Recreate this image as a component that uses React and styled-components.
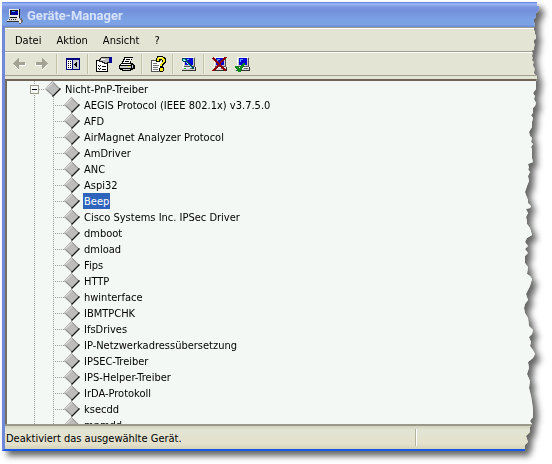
import React, { useState } from 'react';
import styled, { createGlobalStyle, css } from 'styled-components';

const DRIVERS = [
  'AEGIS Protocol (IEEE 802.1x) v3.7.5.0',
  'AFD',
  'AirMagnet Analyzer Protocol',
  'AmDriver',
  'ANC',
  'Aspi32',
  'Beep',
  'Cisco Systems Inc. IPSec Driver',
  'dmboot',
  'dmload',
  'Fips',
  'HTTP',
  'hwinterface',
  'IBMTPCHK',
  'IfsDrives',
  'IP-Netzwerkadressübersetzung',
  'IPSEC-Treiber',
  'IPS-Helper-Treiber',
  'IrDA-Protokoll',
  'ksecdd',
  'mnmdd',
];

// torn right edge: [inset from the right, y]
const TEAR_HEIGHT = 449;
const TEAR = [
  [3, 0], [3, 4], [1, 4], [1, 7], [2, 10], [4, 11], [4, 15], [6, 17], [6, 20], [5, 22], [6, 26], [6, 28],
  [5, 29], [5, 32], [4, 33], [4, 37], [6, 38], [6, 41], [5, 42], [6, 46], [6, 48], [9, 49], [7, 51], [8, 54],
  [7, 56], [8, 58], [6, 60], [7, 63], [5, 67], [6, 71], [3, 74], [3, 77], [4, 79], [4, 87], [7, 91], [5, 94],
  [6, 97], [4, 101], [5, 104], [7, 106], [7, 111], [9, 113], [7, 116], [8, 120], [8, 125], [11, 130],
  [10, 134], [8, 136], [9, 140], [7, 142], [9, 145], [8, 147], [8, 156], [7, 160], [12, 162], [11, 166],
  [12, 167], [10, 170], [12, 174], [11, 179], [13, 184], [15, 190], [14, 193], [12, 198], [12, 201],
  [9, 204], [10, 206], [14, 207], [12, 211], [14, 215], [13, 219], [13, 222], [10, 226], [8, 233],
  [13, 236], [15, 240], [12, 244], [15, 247], [12, 251], [15, 254], [15, 261], [12, 265], [13, 272],
  [10, 274], [8, 277], [10, 284], [12, 288], [14, 292], [12, 298], [15, 302], [16, 306], [15, 311],
  [12, 316], [11, 324], [7, 328], [8, 332], [11, 335], [9, 340], [10, 344], [7, 348], [5, 352], [7, 356],
  [12, 360], [11, 366], [13, 372], [10, 379], [11, 386], [9, 394], [8, 400], [7, 408], [7, 415],
  [10, 419], [8, 422], [10, 425], [10, 430], [14, 434], [12, 440], [15, 443], [15, 449],
];

const tearPolygon = `polygon(0 0, ${TEAR.map(
  ([inset, y]) => `calc(100% - ${inset}px) calc(100% * ${y} / ${TEAR_HEIGHT})`
).join(', ')}, 0 100%)`;

function ComputerIcon({ children }) {
  return (
    <Pixels viewBox="0 0 16 16">
      <path fill="#c9c9c9" d="M2 1h12v9H2z" />
      <path fill="#fff" d="M2 1h11v1H3v8H2z" />
      <path fill="#0000d8" d="M4 2h8v7H4z" />
      <path fill="#5aa0ff" d="M5 3h3v1H6v2H5z" />
      <path fill="#555" d="M13 2h1v9H3v-1h10z" />
      <path fill="#d4d4d4" d="M1 11h13v3H1z" />
      <path fill="#fff" d="M1 11h13v1H1z" />
      <path fill="#333" d="M14 11h1v4H1v-1h13z" />
      <path fill="#18c818" d="M3 12h2v1H3z" />
      <path fill="#666" d="M9 12h4v1H9z" />
      {children}
    </Pixels>
  );
}

function AppIcon() {
  return (
    <Pixels viewBox="0 0 16 16">
      <path fill="#e8e8e8" d="M2 1h10v8H2z" />
      <path fill="#111" d="M3 2h8v1H3zM3 2h1v5H3zM12 1h1v9H3V9h9z" />
      <path fill="#00009c" d="M4 3h7v4H4z" />
      <path fill="#4aa0ff" d="M5 3h3v1H5z" />
      <path fill="#d8d8d8" d="M2 10h10v1h1v2H0v-1h1v-1h1z" />
      <path fill="#333" d="M2 11h1v1H2zM4 11h1v1H4zM6 11h1v1H6zM8 11h1v1H8zM0 13h13v1H0z" />
      <path fill="#e8e8e8" d="M10 9h2v2h2v1h1v2h-1v1h-2v-2h-1v-2h-1z" />
      <path fill="#666" d="M14 10h1v2h1v2h-1v1h-1v-3h-1v-1h1zM12 15h2v1h-2z" />
    </Pixels>
  );
}

function ArrowIcon({ forward }) {
  return (
    <Pixels viewBox="0 0 16 16">
      <g transform={forward ? 'translate(16 0) scale(-1 1)' : undefined}>
        <path fill="#fff" d="M3 8h1v1h1v1h1v1h1v1h1v2H7v-1H6v-1H5v-1H4v-1H3zM8 10h7V7h-1v2H8z" />
        <path fill="#a5a494" d="M7 2h1v4h6v3H8v4H7v-1H6v-1H5v-1H4V9H3V8H2V7h1V6h1V5h1V4h1V3h1z" />
      </g>
    </Pixels>
  );
}

function PaneIcon() {
  return (
    <Pixels viewBox="0 0 16 16">
      <path fill="#000080" d="M1 2h14v12H1z" />
      <path fill="#fff" d="M2 4h5v9H2z" />
      <path fill="#c9c9c9" d="M8 4h6v9H8z" />
      <path fill="#000" d="M3 5h1v1H3zM5 5h1v1H5zM3 7h1v1H3zM5 7h1v1H5zM3 9h1v1H3zM5 9h1v1H5zM3 11h1v1H3zM5 11h1v1H5z" />
      <path fill="#000" d="M9 8h1V7h1V6h1v5h-1v-1h-1V9H9z" />
    </Pixels>
  );
}

function PropertiesIcon() {
  return (
    <Pixels viewBox="0 0 16 16">
      <path fill="#000" d="M0 4h12v12H0z" />
      <path fill="#fff" d="M1 5h10v10H1z" />
      <path fill="#000" d="M2 9h1v1h1V9h1v1H4v1H3v-1H2zM6 10h4v1H6zM2 12h1v1h1v-1h1v1H4v1H3v-1H2zM6 13h4v1H6z" />
      <path fill="#222" d="M4 2h1V1h8v6h-2v1H8V7H6V6H3V3h1z" />
      <path fill="#b9b9b9" d="M5 2h8v4h-2v1H9V6H7V5H4V4h1z" />
      <path fill="#fff" d="M5 3h4v1H5z" />
      <path fill="#000098" d="M13 1h3v6h-3z" />
    </Pixels>
  );
}

function PrinterIcon() {
  return (
    <Pixels viewBox="0 0 16 16">
      <path fill="#000" d="M5 1h9v1h-1v2h-1v3h2v1h1v1h1v4h-2v1h-2v1H3v-1H1v-1H0V9h1V8h1V7h1V5h1V3h1z" />
      <path fill="#fff" d="M6 2h7v1h-1v2h-1v2H4V6h1V4h1z" />
      <path fill="#000" d="M7 3h4v1H7zM6 5h4v1H6z" />
      <path fill="#c9c9c9" d="M2 8h10v1H2zM1 10h11v2H1zM13 9h1v3h-1z" />
      <path fill="#fff" d="M2 8h9v1H2z" />
      <path fill="#e8e050" d="M9 10h2v1H9z" />
      <path fill="#c9c9c9" d="M4 13h7v1H4z" />
    </Pixels>
  );
}

function HelpIcon() {
  return (
    <Pixels viewBox="0 0 16 16">
      <path fill="#555" d="M1 4h10v12H1z" />
      <path fill="#fff" d="M2 5h9v10H2z" />
      <path fill="#777" d="M3 7h4v1H3zM3 9h6v1H3zM3 11h5v1H3zM3 13h5v1H3z" />
      <path fill="#000" d="M7 0h6v1h2v1h1v5h-1v1h-1v1h-1v2h1v4h-1v1h-3v-1H9v-3h1V8h1V7h1V4h-2v2H6V2h1z" />
      <path fill="#ffed20" d="M8 1h5v1h1v1h1v3h-1v1h-1v1h-1v2h-2V8h1V7h1V6h1V4h-1V3H9v2H7V2h1zM10 12h3v3h-3z" />
      <path fill="#fffbb0" d="M9 1h3v1H9z" />
    </Pixels>
  );
}

function DiamondIcon() {
  return (
    <Diamond viewBox="0 0 16 16" aria-hidden="true">
      <path fill="#909090" d="M7.500 0 15.500 8 8 15.500 0 8z" />
      <path fill="#181818" d="M15 7 16 8 8 16 7 15z" />
      <path fill="#e4e4e4" d="M7.500 1 1 7.500 2 8.500 8.500 2z" />
      <path fill="#bcbcbc" d="M8 2 14 8 8 14 2 8z" />
    </Diamond>
  );
}

const MENUS = ['Datei', 'Aktion', 'Ansicht', '?'];

export default function App() {
  const [open, setOpen] = useState(true);
  const [selected, setSelected] = useState('Beep');

  return (
    <>
      <GlobalStyle />
      <Shadow>
        <Window>
          <TitleBar>
            <AppIcon />
            <Title>Geräte-Manager</Title>
          </TitleBar>
          <Body>
            <MenuBar>
              {MENUS.map((name) => (
                <MenuButton key={name}>{name}</MenuButton>
              ))}
            </MenuBar>
            <ToolBar>
              <ToolButton aria-label="Zurück" disabled><ArrowIcon /></ToolButton>
              <ToolButton aria-label="Vorwärts" disabled><ArrowIcon forward /></ToolButton>
              <Separator />
              <ToolButton aria-label="Konsolenstruktur"><PaneIcon /></ToolButton>
              <Separator />
              <ToolButton aria-label="Eigenschaften"><PropertiesIcon /></ToolButton>
              <ToolButton aria-label="Drucken"><PrinterIcon /></ToolButton>
              <Separator />
              <ToolButton aria-label="Hilfe"><HelpIcon /></ToolButton>
              <Separator />
              <ToolButton aria-label="Nach geänderter Hardware suchen">
                <ComputerIcon>
                  <path fill="#045" d="M1 2h4v1h1v2h1v1h1v1h1v1h1v1h1v1h1v1h1v2h-2v-1h-1v-1H9v-1H8V9H7V8H6V7H5V6H2V5H1z" />
                  <path fill="#58d8f0" d="M2 3h2v1h1v2h1v1h1v1h1v1h1v1h1v1h1v1h-1v-1H9v-1H8V9H7V8H6V7H5V5H2z" />
                  <path fill="#fff" d="M3 4h1v1H3zM6 7h1v1H6z" />
                </ComputerIcon>
              </ToolButton>
              <Separator />
              <ToolButton aria-label="Deinstallieren">
                <ComputerIcon>
                  <path stroke="#8c0008" strokeWidth="2" d="M1 2 14 15M14 1 1 15" />
                </ComputerIcon>
              </ToolButton>
              <ToolButton aria-label="Aktivieren">
                <ComputerIcon>
                  <path fill="#0b8a18" d="M0 10h3v1h1v1h1v-2h1V9h1V8h1V7h2v2H9v1H8v2H7v2H6v2H3v-1H2v-2H1v-1H0z" />
                </ComputerIcon>
              </ToolButton>
            </ToolBar>
            <Tree role="tree">
              <RootRow role="treeitem" aria-expanded={open}>
                <Expander aria-label="Nicht-PnP-Treiber ein-/ausblenden" onClick={() => setOpen(!open)}>
                  <Pixels $size={7} viewBox="0 0 7 7">
                    <path d={open ? 'M1 3h5v1H1z' : 'M1 3h5v1H1zM3 1h1v5H3z'} />
                  </Pixels>
                </Expander>
                <RootBranch />
                <DiamondIcon />
                <Label>Nicht-PnP-Treiber</Label>
              </RootRow>
              {open &&
                DRIVERS.map((name) => (
                  <Row key={name} role="treeitem" aria-selected={name === selected}>
                    <Guide />
                    <Branch />
                    <DiamondIcon />
                    <Label $selected={name === selected} onClick={() => setSelected(name)}>
                      {name}
                    </Label>
                  </Row>
                ))}
            </Tree>
          </Body>
          <StatusBar>
            <StatusText>Deaktiviert das ausgewählte Gerät.</StatusText>
            <StatusPane />
          </StatusBar>
        </Window>
      </Shadow>
    </>
  );
}

const GlobalStyle = createGlobalStyle`
  * {
    box-sizing: border-box;
  }

  body {
    margin: 0;
    background: #fff;
    color: #000;
    font: 11px/16px "DejaVu Sans Condensed", "DejaVu Sans", Tahoma, sans-serif;
  }

  button {
    padding: 0;
    border: 0;
    background: none;
    color: inherit;
    font: inherit;
  }
`;

const Shadow = styled.div`
  display: flex;
  height: 100vh;
  padding: 2px 12px 13px 2px;
  filter: drop-shadow(5px 5px 3px rgba(0, 0, 0, 0.6));
`;

const Window = styled.main`
  flex: 1;
  min-width: 0;
  display: flex;
  flex-direction: column;
  border-left: 3px solid #7088da;
  border-bottom: 2px solid #1458e8;
  background: #e3e4d4;
  clip-path: ${tearPolygon};
`;

const TitleBar = styled.header`
  display: flex;
  align-items: center;
  gap: 4px;
  flex: none;
  height: 25px;
  margin-left: -3px;
  padding: 3px 5px 0;
  background: linear-gradient(#5a80e4, #a0b8f2 2px, #7a98e2 5px, #7390da 9px, #7ca2e6 18px, #7ca2e6 23px, #6482cc);
`;

const Title = styled.h1`
  margin: 0;
  color: #d6e2fa;
  font: bold 13px/20px Roboto, "Noto Sans", sans-serif;
`;

const Pixels = styled.svg`
  display: block;
  flex: none;
  width: ${(props) => props.$size || 16}px;
  height: ${(props) => props.$size || 16}px;
  shape-rendering: crispEdges;
`;

const Body = styled.div`
  flex: 1;
  min-height: 0;
  display: flex;
  flex-direction: column;
`;

const bar = css`
  display: flex;
  align-items: center;
  flex: none;
  height: 24px;
  border-top: 1px solid #fff;
  border-bottom: 1px solid #a09f90;
`;

const MenuBar = styled.nav`
  ${bar}
  height: 25px;
  padding-left: 2px;
  border-top: 1px solid #a09f90;
  box-shadow: inset 0 1px #fff;
`;

const MenuButton = styled.button`
  padding: 2px 7px 0 8px;
`;

const ToolBar = styled.div`
  ${bar}
  padding-left: 2px;
`;

const ToolButton = styled.button`
  display: grid;
  place-items: center;
  width: 23px;
  height: 22px;
`;

const Separator = styled.span`
  width: 2px;
  height: 20px;
  margin: 0 3px;
  border-left: 1px solid #c4c2a8;
  border-right: 1px solid #eeeee2;
`;

const Tree = styled.div`
  flex: 1;
  min-height: 0;
  margin-top: 3px;
  overflow: hidden;
  border-top: 2px solid #6f6455;
  border-left: 2px solid #756f62;
  background: #f3f8f5;
`;

const dotsDown = 'repeating-linear-gradient(#a0a098 0 1px, transparent 1px 2px)';
const dotsAcross = 'repeating-linear-gradient(90deg, #a0a098 0 1px, transparent 1px 2px)';

const Row = styled.div`
  display: flex;
  align-items: center;
  height: 16px;
  padding-left: 27px;
  white-space: nowrap;
`;

const RootRow = styled(Row)`
  padding-left: 23px;
  background: ${dotsDown} 27px 0 / 1px 100% no-repeat;
`;

const Expander = styled.button`
  width: 9px;
  height: 9px;
  && {
    border: 1px solid #9c9a88;
    background: #f3f8f5;
  }
`;

const RootBranch = styled.span`
  width: 6px;
  height: 16px;
  background: ${dotsAcross} 0 8px / 100% 1px no-repeat;
`;

const Guide = styled.span`
  width: 19px;
  height: 16px;
  background: ${dotsDown} 0 0 / 1px 100% no-repeat;
`;

const Branch = styled.span`
  width: 11px;
  height: 16px;
  background:
    ${dotsDown} 0 0 / 1px 100% no-repeat,
    ${dotsAcross} 0 8px / 100% 1px no-repeat;
`;

const Diamond = styled.svg`
  flex: none;
  width: 16px;
  height: 16px;
  margin-right: 3px;
`;

const Label = styled.span`
  height: 16px;
  padding: 1px 1px 0;
  cursor: default;
  ${(props) =>
    props.$selected &&
    css`
      background: #2f64bd;
      color: #fff;
    `}
`;

const StatusBar = styled.footer`
  display: flex;
  align-items: center;
  flex: none;
  height: 25px;
  border-top: 2px solid #9a9888;
  background: linear-gradient(#d2d1bd, #e3e4d4 4px, #e3e1cb 18px, #d4d3b8);
`;

const StatusText = styled.span`
  flex: 0 1 410px;
  padding: 2px 0 0 1px;
`;

const StatusPane = styled.span`
  flex: 1;
  height: 17px;
  border-left: 1px solid #b5b39c;
  box-shadow: inset 1px 0 #fff;
`;
